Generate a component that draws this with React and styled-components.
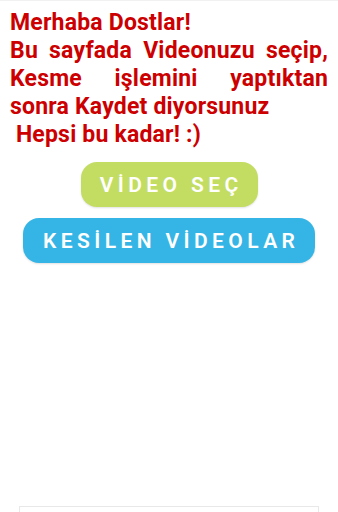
import React from "react";
import styled, { createGlobalStyle } from "styled-components";

const GlobalStyle = createGlobalStyle`
  html, body {
    margin: 0;
    padding: 0;
    background: #ffffff;
  }
  body {
    font-family: Roboto, "Liberation Sans", Arial, sans-serif;
  }
`;

const Page = styled.div`
  height: 100vh;
  display: flex;
  flex-direction: column;
  align-items: center;
  overflow: hidden;
  border-top: 1px solid #f1f1f1;
  box-sizing: border-box;
`;

const Intro = styled.p`
  align-self: stretch;
  margin: 0;
  padding: 8px 10px 0 10px;
  color: #cc0000;
  font-size: 23px;
  font-weight: 700;
  line-height: 28px;
  letter-spacing: 0.2px;
  text-align: justify;
  white-space: pre-line;
`;

const Btn = styled.button`
  margin-top: ${p => p.$top}px;
  width: ${p => p.$width}px;
  height: 45px;
  border: none;
  border-radius: 16px;
  background: ${p => p.$color};
  color: #ffffff;
  font-family: Roboto, "Liberation Sans", Arial, sans-serif;
  font-size: 21px;
  font-weight: 600;
  letter-spacing: 4.4px;
  text-indent: 4.4px;
  box-shadow: 0 1px 2px rgba(0, 0, 0, 0.12);
  padding: 0;
  cursor: pointer;
`;

const AdBox = styled.div`
  margin-top: auto;
  width: 300px;
  height: 6px;
  flex-shrink: 0;
  border: 1px solid #e8e8e8;
  border-bottom: none;
  box-sizing: border-box;
`;

export default function App() {
  return (
    <>
      <GlobalStyle />
      <Page>
        <Intro>
          {"Merhaba Dostlar!\nBu sayfada Videonuzu seçip, Kesme işlemini yaptıktan sonra Kaydet diyorsunuz\n\u00a0Hepsi bu kadar! :)"}
        </Intro>
        <Btn $top={13} $width={177} $color="#c3dd62">VİDEO SEÇ</Btn>
        <Btn $top={11} $width={292} $color="#35b5e5">KESİLEN VİDEOLAR</Btn>
        <AdBox />
      </Page>
    </>
  );
}
